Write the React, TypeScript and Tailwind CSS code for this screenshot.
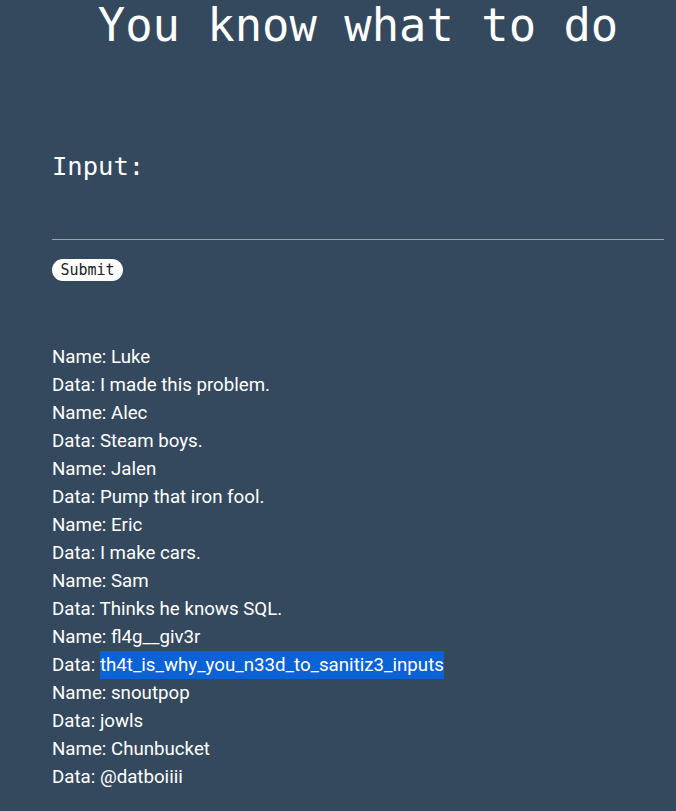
import React from "react";

const rows: [string, string][] = [
  ["Luke", "I made this problem."],
  ["Alec", "Steam boys."],
  ["Jalen", "Pump that iron fool."],
  ["Eric", "I make cars."],
  ["Sam", "Thinks he knows SQL."],
  ["fl4g__giv3r", "th4t_is_why_you_n33d_to_sanitiz3_inputs"],
  ["snoutpop", "jowls"],
  ["Chunbucket", "@datboiiii"],
];

export default function App() {
  return (
    <div className="min-h-[811px] bg-[#34495e] text-white overflow-hidden">
      <div className="pl-[52px] pr-[12px]">
        <h1
          className="text-center text-[45.5px] leading-[52px] mt-0 text-white"
          style={{ fontFamily: '"DejaVu Sans Mono", monospace' }}
        >
          You know what to do
        </h1>
        <div
          className="mt-[99px] text-[25.5px] leading-[30px]"
          style={{ fontFamily: '"DejaVu Sans Mono", monospace' }}
        >
          Input:
        </div>
        <input
          type="text"
          className="mt-[15px] block w-full h-[44px] bg-transparent border-0 border-b border-[#a0a0a0] outline-none text-white"
        />
        <button
          className="mt-[19px] block h-[22px] w-[71px] rounded-full bg-white text-[#222] text-[15px] leading-[22px]"
          style={{ fontFamily: '"DejaVu Sans Mono", monospace' }}
        >
          Submit
        </button>
        <div
          className="mt-[62px] text-[18.7px] leading-[28px]"
          style={{ fontFamily: "Roboto, sans-serif" }}
        >
          {rows.map(([n, d]) => (
            <React.Fragment key={n}>
              <div>Name: {n}</div>
              <div>
                Data:{" "}
                {n === "fl4g__giv3r" ? (
                  <span className="bg-[#0b62d6] py-[3px]">{d}</span>
                ) : (
                  d
                )}
              </div>
            </React.Fragment>
          ))}
        </div>
      </div>
    </div>
  );
}
